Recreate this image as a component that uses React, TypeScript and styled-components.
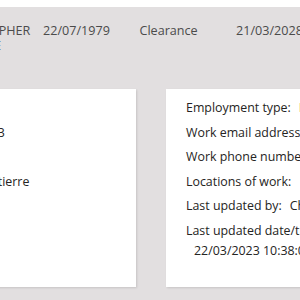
import React from "react";
import styled, { createGlobalStyle } from "styled-components";

const GlobalStyle = createGlobalStyle`
  html, body {
    margin: 0;
    padding: 0;
    background: #e2dfe0;
    overflow: hidden;
  }
  body {
    font-family: "Open Sans", "Noto Sans", sans-serif;
  }
`;

const Viewport = styled.div`
  width: 300px;
  height: 300px;
  overflow: hidden;
  background: #e2dfe0;
`;

const TopBar = styled.div`
  height: 7px;
  background: #ffffff;
`;

const Canvas = styled.div`
  margin-left: -200px;
  width: 800px;
`;

const Summary = styled.div`
  display: grid;
  grid-template-columns: repeat(5, 96.5px);
  padding: 16px 0 0 146.5px;
  height: 82px;
  box-sizing: border-box;
  font-size: 12.6px;
  line-height: 15px;
  color: #4b4b4b;
`;

const SummaryCell = styled.div`
  padding-right: 8px;
`;

const Cards = styled.div`
  display: grid;
  grid-template-columns: 336px 400px;
  column-gap: 30px;
`;

const Card = styled.div<{ $inset: number }>`
  background: #ffffff;
  height: 198px;
  box-sizing: border-box;
  padding: 9px ${(p) => p.$inset}px;
  box-shadow: 1px 1px 2px rgba(0, 0, 0, 0.12);
`;

const Row = styled.div`
  font-size: 12.4px;
  line-height: 20px;
  margin-bottom: 4.5px;
  color: #252423;
  white-space: nowrap;
`;

const Value = styled.span<{ $tone?: string; $wrap?: boolean }>`
  display: ${(p) => (p.$wrap ? "block" : "inline-block")};
  margin-left: 8px;
  color: ${(p) => p.$tone || "#252423"};
`;

const left = [
  { label: "Known as:", value: "Chris" },
  { label: "Employee number:", value: "104823" },
  { label: "Gender:", value: "Male" },
  { label: "Full name:", value: "Christopher Latierre" },
];

const right = [
  { label: "Employment type:", value: "Permanent", tone: "#c98a3e" },
  { label: "Work email address:", value: "c.latierre@example.com" },
  { label: "Work phone number:", value: "0121 496 0822" },
  { label: "Locations of work:", value: "" },
  { label: "Last updated by:", value: "Christopher Latierre" },
  { label: "Last updated date/time:", value: "22/03/2023 10:38:05", wrap: true },
];

const App: React.FC = () => {
  return (
    <Viewport>
      <GlobalStyle />
      <TopBar />
      <Canvas>
        <Summary>
          <SummaryCell>CHRISTOPHER LATIERRE</SummaryCell>
          <SummaryCell>22/07/1979</SummaryCell>
          <SummaryCell>Clearance</SummaryCell>
          <SummaryCell>21/03/2028</SummaryCell>
          <SummaryCell>Active</SummaryCell>
        </Summary>
        <Cards>
          <Card $inset={45}>
            {left.map((r) => (
              <Row key={r.label}>
                {r.label}
                <Value>{r.value}</Value>
              </Row>
            ))}
          </Card>
          <Card $inset={20}>
            {right.map((r) => (
              <Row key={r.label}>
                {r.label}
                <Value $tone={r.tone} $wrap={r.wrap}>
                  {r.value}
                </Value>
              </Row>
            ))}
          </Card>
        </Cards>
      </Canvas>
    </Viewport>
  );
};

export default App;
